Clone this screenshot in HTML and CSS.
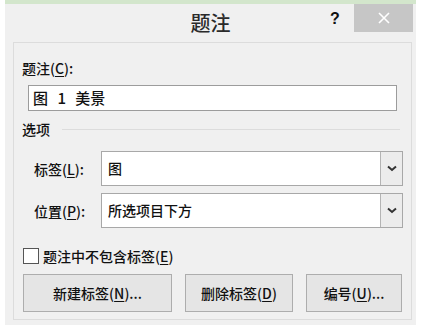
FILE: index.html
```html
<!DOCTYPE html>
<html lang="zh-CN">
<head>
<meta charset="utf-8">
<title>题注</title>
<link rel="stylesheet" href="styles.css">
</head>
<body>
<div class="window">
  <div class="titlebar">
    <div></div>
    <div class="title">题注</div>
    <div class="controls">
      <span class="help">?</span>
      <span class="close">
        <svg width="12" height="12" viewBox="0 0 12 12"><path d="M1 1 L11 11 M11 1 L1 11" stroke="#fff" stroke-width="1.6" fill="none"/></svg>
      </span>
    </div>
  </div>
  <div class="panel">
    <div class="label">题注(<u>C</u>):</div>
    <div class="textbox">图 1 美景</div>
    <div class="group">
      <span>选项</span>
      <span class="sep"></span>
    </div>
    <div class="field">
      <span class="flabel">标签(<u>L</u>):</span>
      <div class="combo">
        <span class="cval">图</span>
        <span class="drop"><svg width="10" height="7" viewBox="0 0 10 7"><path d="M1 1.5 L5 5 L9 1.5" stroke="#333" stroke-width="2" fill="none"/></svg></span>
      </div>
    </div>
    <div class="field second">
      <span class="flabel">位置(<u>P</u>):</span>
      <div class="combo">
        <span class="cval">所选项目下方</span>
        <span class="drop"><svg width="10" height="7" viewBox="0 0 10 7"><path d="M1 1.5 L5 5 L9 1.5" stroke="#333" stroke-width="2" fill="none"/></svg></span>
      </div>
    </div>
    <div class="check">
      <span class="box"></span>
      <span>题注中不包含标签(<u>E</u>)</span>
    </div>
    <div class="buttons">
      <span class="btn b1">新建标签(<u>N</u>)...</span>
      <span class="btn b2">删除标签(<u>D</u>)</span>
      <span class="btn b3">编号(<u>U</u>)...</span>
    </div>
  </div>
</div>
</body>
</html>
```
FILE: styles.css
```css
html, body {
  margin: 0;
  padding: 0;
  background: #ffffff;
}
body {
  font-family: "Noto Sans CJK SC", "Noto Sans", sans-serif;
  font-size: 14px;
  font-weight: 500;
  color: #111;
  width: 423px;
  height: 325px;
  overflow: hidden;
}
u {
  text-decoration: underline;
  text-underline-offset: 2px;
}
.window {
  margin-left: 5px;
  width: 411px;
  height: 325px;
  box-sizing: border-box;
  border-top: 4px solid #d3e6cc;
  background: #f0f0f0;
}
.titlebar {
  height: 38px;
  display: grid;
  grid-template-columns: 1fr auto 1fr;
  align-items: start;
}
.title {
  font-size: 20px;
  line-height: 38px;
  color: #2a2a2a;
}
.controls {
  display: flex;
  justify-content: flex-end;
  align-items: flex-start;
  padding-right: 3px;
}
.help {
  font-family: "Liberation Sans", sans-serif;
  font-weight: bold;
  font-size: 16px;
  line-height: 18px;
  margin-top: 6px;
  width: 16px;
  text-align: center;
  margin-right: 11px;
  color: #111;
}
.close {
  width: 59px;
  height: 28px;
  background: #c6c6c6;
  display: flex;
  align-items: center;
  justify-content: center;
}
.panel {
  margin: 0 4px 0 8px;
  border: 1px solid #dcdcdc;
  padding: 16px 0 7px 0;
  background: #f0f0f0;
}
.label {
  padding-left: 8px;
  line-height: 18px;
}
.textbox {
  margin: 8px 14px 0 14px;
  height: 26px;
  box-sizing: border-box;
  border: 1px solid #9c9c9c;
  background: #fff;
  padding-left: 4px;
  font-size: 15px;
  line-height: 24px;
  word-spacing: 6px;
}
.group {
  margin-top: 9px;
  padding-left: 8px;
  display: flex;
  align-items: center;
  line-height: 18px;
}
.sep {
  flex: 1;
  height: 1px;
  background: #dcdcdc;
  margin: 0 11px 0 12px;
}
.field {
  margin-top: 13px;
  display: flex;
  align-items: center;
  padding-left: 20px;
}
.field.second {
  margin-top: 7px;
}
.flabel {
  width: 67px;
  line-height: 18px;
}
.combo {
  width: 302px;
  height: 35px;
  box-sizing: border-box;
  border: 1px solid #a8a8a8;
  background: #fff;
  display: flex;
  align-items: stretch;
}
.cval {
  flex: 1;
  padding-left: 6px;
  line-height: 33px;
}
.drop {
  width: 22px;
  box-sizing: border-box;
  border-left: 1px solid #b4b4b4;
  background: #ececec;
  display: flex;
  align-items: center;
  justify-content: center;
}
.check {
  margin-top: 19px;
  padding-left: 9px;
  display: flex;
  align-items: center;
  line-height: 18px;
}
.box {
  width: 16px;
  height: 16px;
  box-sizing: border-box;
  border: 1px solid #555;
  background: #fff;
  margin-right: 4px;
}
.buttons {
  margin-top: 9px;
  padding-left: 9px;
  display: flex;
  gap: 13px;
}
.btn {
  height: 38px;
  box-sizing: border-box;
  border: 1px solid #adadad;
  background: #e5e5e5;
  display: flex;
  align-items: center;
  justify-content: center;
  line-height: 18px;
}
.b1 { width: 149px; }
.b2 { width: 108px; }
.b3 { width: 96px; }
```
